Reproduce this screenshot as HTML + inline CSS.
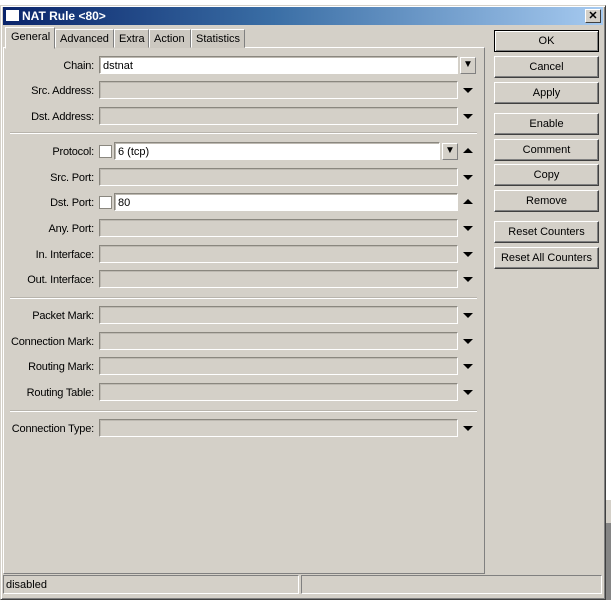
<!DOCTYPE html>
<html><head><style>
*{box-sizing:border-box;margin:0;padding:0}
body{width:611px;height:600px;overflow:hidden;background:#fff;font-family:"Liberation Sans",sans-serif;font-size:11px;color:#000;position:relative}
.a{position:absolute}
.lbl{position:absolute;right:517px;text-align:right;white-space:nowrap;letter-spacing:-0.2px}
.f{position:absolute;height:18px;border:1px solid;border-color:#8a877f #fff #fff #8a877f;background:#d4d0c8;box-shadow:inset 1px 1px 0 #bdb9b1}
.w{background:#fff;padding:3px 0 0 3px}
.btn{position:absolute;left:494px;width:105px;height:22px;border:1px solid;border-color:#fff #404040 #404040 #fff;background:#d4d0c8;text-align:center;line-height:20px;box-shadow:inset -1px -1px 0 #808080}
.dn,.up{position:absolute;width:0;height:0;border-left:5px solid transparent;border-right:5px solid transparent}
.dn{border-top:5px solid #000}
.up{border-bottom:5px solid #000}
.dd{position:absolute;width:16px;height:17px;border:1px solid;border-color:#fff #808080 #808080 #fff;background:#d4d0c8;font-size:10px;text-align:center;line-height:14px}
.sep{position:absolute;left:10px;width:467px;height:2px;border-top:1px solid #b8b4ac;border-bottom:1px solid #fff}
.cb{position:absolute;width:13px;height:13px;background:#fff;border:1px solid #8a877f}
</style></head><body>
<div class="a" style="left:0;top:0;width:611px;height:6px;background:#fff;border-bottom:1px solid #999"></div>
<div class="a" style="left:605px;top:0;width:6px;height:600px;background:#fff"></div>
<div class="a" style="left:605px;top:500px;width:6px;height:23px;background:#d4d0c8"></div>
<div class="a" style="left:605px;top:523px;width:6px;height:77px;background:#858585"></div>
<div class="a" style="left:0;top:5px;width:606px;height:595px;background:#d4d0c8;border:1px solid;border-color:#d4d0c8 #404040 #404040 #d4d0c8;box-shadow:inset 1px 1px 0 #fff,inset -1px -1px 0 #808080"></div>
<div class="a" style="left:3px;top:7px;width:600px;height:18px;background:linear-gradient(to right,#0a246a,#3a6ea5 45%,#a6caf0)"></div>
<div class="a" style="left:6px;top:10px;width:13px;height:11px;background:#fff"></div>
<div class="a" style="left:22px;top:8px;color:#fff;font-weight:bold;font-size:12px;line-height:16px">NAT Rule &lt;80&gt;</div>
<div class="a" style="left:585px;top:9px;width:16px;height:14px;background:#d4d0c8;border:1px solid;border-color:#fff #404040 #404040 #fff;font-weight:bold;font-size:11px;line-height:12px;text-align:center">✕</div>

<div class="a" style="left:3px;top:47px;width:482px;height:527px;border:1px solid;border-color:#fff #808080 #808080 #fff"></div>
<div class="a" style="left:55px;top:29px;width:59px;height:19px;background:#ccc8c0;border:1px solid;border-color:#fff #808080 transparent #fff;padding:3px 0 0 4px">Advanced</div>
<div class="a" style="left:114px;top:29px;width:35px;height:19px;background:#ccc8c0;border:1px solid;border-color:#fff #808080 transparent #fff;padding:3px 0 0 4px">Extra</div>
<div class="a" style="left:149px;top:29px;width:42px;height:19px;background:#ccc8c0;border:1px solid;border-color:#fff #808080 transparent #fff;padding:3px 0 0 4px">Action</div>
<div class="a" style="left:191px;top:29px;width:54px;height:19px;background:#ccc8c0;border:1px solid;border-color:#fff #808080 transparent #fff;padding:3px 0 0 4px">Statistics</div>
<div class="a" style="left:5px;top:27px;width:50px;height:22px;background:#d4d0c8;border:1px solid;border-color:#fff #808080 transparent #fff;padding:3px 0 0 5px">General</div>

<div class="lbl" style="top:60px">Chain:</div>
<div class="f w" style="left:99px;top:56px;width:359px">dstnat</div>
<div class="dd" style="left:460px;top:57px">▼</div>
<div class="lbl" style="top:85px">Src. Address:</div>
<div class="f" style="left:99px;top:81px;width:359px"></div><div class="dn" style="left:463px;top:88px"></div>
<div class="lbl" style="top:111px">Dst. Address:</div>
<div class="f" style="left:99px;top:107px;width:359px"></div><div class="dn" style="left:463px;top:114px"></div>
<div class="sep" style="top:132px"></div>

<div class="lbl" style="top:146px">Protocol:</div>
<div class="cb" style="left:99px;top:145px"></div>
<div class="f w" style="left:114px;top:142px;width:326px">6 (tcp)</div>
<div class="dd" style="left:442px;top:143px">▼</div><div class="up" style="left:463px;top:148px"></div>
<div class="lbl" style="top:172px">Src. Port:</div>
<div class="f" style="left:99px;top:168px;width:359px"></div><div class="dn" style="left:463px;top:175px"></div>
<div class="lbl" style="top:197px">Dst. Port:</div>
<div class="cb" style="left:99px;top:196px"></div>
<div class="f w" style="left:114px;top:193px;width:344px">80</div><div class="up" style="left:463px;top:199px"></div>
<div class="lbl" style="top:223px">Any. Port:</div>
<div class="f" style="left:99px;top:219px;width:359px"></div><div class="dn" style="left:463px;top:226px"></div>
<div class="lbl" style="top:249px">In. Interface:</div>
<div class="f" style="left:99px;top:245px;width:359px"></div><div class="dn" style="left:463px;top:252px"></div>
<div class="lbl" style="top:274px">Out. Interface:</div>
<div class="f" style="left:99px;top:270px;width:359px"></div><div class="dn" style="left:463px;top:277px"></div>
<div class="sep" style="top:297px"></div>

<div class="lbl" style="top:310px">Packet Mark:</div>
<div class="f" style="left:99px;top:306px;width:359px"></div><div class="dn" style="left:463px;top:313px"></div>
<div class="lbl" style="top:336px">Connection Mark:</div>
<div class="f" style="left:99px;top:332px;width:359px"></div><div class="dn" style="left:463px;top:339px"></div>
<div class="lbl" style="top:361px">Routing Mark:</div>
<div class="f" style="left:99px;top:357px;width:359px"></div><div class="dn" style="left:463px;top:364px"></div>
<div class="lbl" style="top:387px">Routing Table:</div>
<div class="f" style="left:99px;top:383px;width:359px"></div><div class="dn" style="left:463px;top:390px"></div>
<div class="sep" style="top:410px"></div>
<div class="lbl" style="top:423px">Connection Type:</div>
<div class="f" style="left:99px;top:419px;width:359px"></div><div class="dn" style="left:463px;top:426px"></div>

<div class="btn" style="top:30px;border:1px solid #000;box-shadow:inset 1px 1px 0 #fff,inset -1px -1px 0 #808080">OK</div>
<div class="btn" style="top:56px">Cancel</div>
<div class="btn" style="top:82px">Apply</div>
<div class="btn" style="top:113px">Enable</div>
<div class="btn" style="top:139px">Comment</div>
<div class="btn" style="top:164px">Copy</div>
<div class="btn" style="top:190px">Remove</div>
<div class="btn" style="top:221px">Reset Counters</div>
<div class="btn" style="top:247px">Reset All Counters</div>

<div class="a" style="left:3px;top:575px;width:296px;height:19px;border:1px solid;border-color:#808080 #fff #fff #808080;padding:3px 0 0 2px">disabled</div>
<div class="a" style="left:301px;top:575px;width:301px;height:19px;border:1px solid;border-color:#808080 #fff #fff #808080"></div>
</body></html>
